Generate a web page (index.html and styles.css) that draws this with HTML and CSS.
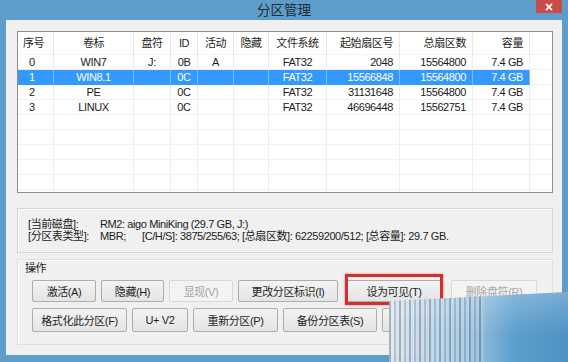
FILE: index.html
```html
<!DOCTYPE html>
<html lang="zh-CN">
<head>
<meta charset="utf-8">
<title>分区管理</title>
<link rel="stylesheet" href="styles.css">
</head>
<body>
<div class="window">
  <div class="titlebar">
    <div></div>
    <div class="title">分区管理</div>
    <div class="close"><svg width="10" height="8" viewBox="0 0 10 8"><path d="M2 0.8 L8 7.2 M8 0.8 L2 7.2" stroke="#fff" stroke-width="1.8" fill="none"/></svg></div>
  </div>
  <div class="content">
    <div class="listbox">
      <div class="row head">
        <div class="c c1">序号</div><div class="c">卷标</div><div class="c">盘符</div><div class="c">ID</div><div class="c">活动</div><div class="c">隐藏</div><div class="c">文件系统</div><div class="c r">起始扇区号</div><div class="c r">总扇区数</div><div class="c r">容量</div><div class="c last"></div>
      </div>
      <div class="row">
        <div class="c c1">0</div><div class="c">WIN7</div><div class="c">J:</div><div class="c">0B</div><div class="c">A</div><div class="c"></div><div class="c">FAT32</div><div class="c r">2048</div><div class="c r">15564800</div><div class="c r">7.4 GB</div><div class="c last"></div>
      </div>
      <div class="row sel">
        <div class="c c1">1</div><div class="c">WIN8.1</div><div class="c"></div><div class="c">0C</div><div class="c"></div><div class="c"></div><div class="c">FAT32</div><div class="c r">15566848</div><div class="c r">15564800</div><div class="c r">7.4 GB</div><div class="c last"></div>
      </div>
      <div class="row">
        <div class="c c1">2</div><div class="c">PE</div><div class="c"></div><div class="c">0C</div><div class="c"></div><div class="c"></div><div class="c">FAT32</div><div class="c r">31131648</div><div class="c r">15564800</div><div class="c r">7.4 GB</div><div class="c last"></div>
      </div>
      <div class="row">
        <div class="c c1">3</div><div class="c">LINUX</div><div class="c"></div><div class="c">0C</div><div class="c"></div><div class="c"></div><div class="c">FAT32</div><div class="c r">46696448</div><div class="c r">15562751</div><div class="c r">7.4 GB</div><div class="c last"></div>
      </div>
      <div class="row"><div class="c"></div><div class="c"></div><div class="c"></div><div class="c"></div><div class="c"></div><div class="c"></div><div class="c"></div><div class="c"></div><div class="c"></div><div class="c"></div><div class="c last"></div></div>
      <div class="row"><div class="c"></div><div class="c"></div><div class="c"></div><div class="c"></div><div class="c"></div><div class="c"></div><div class="c"></div><div class="c"></div><div class="c"></div><div class="c"></div><div class="c last"></div></div>
      <div class="row"><div class="c"></div><div class="c"></div><div class="c"></div><div class="c"></div><div class="c"></div><div class="c"></div><div class="c"></div><div class="c"></div><div class="c"></div><div class="c"></div><div class="c last"></div></div>
      <div class="row"><div class="c"></div><div class="c"></div><div class="c"></div><div class="c"></div><div class="c"></div><div class="c"></div><div class="c"></div><div class="c"></div><div class="c"></div><div class="c"></div><div class="c last"></div></div>
      <div class="row"><div class="c"></div><div class="c"></div><div class="c"></div><div class="c"></div><div class="c"></div><div class="c"></div><div class="c"></div><div class="c"></div><div class="c"></div><div class="c"></div><div class="c last"></div></div>
      <div class="row"><div class="c"></div><div class="c"></div><div class="c"></div><div class="c"></div><div class="c"></div><div class="c"></div><div class="c"></div><div class="c"></div><div class="c"></div><div class="c"></div><div class="c last"></div></div>
    </div>

    <div class="info">
      <div class="line"><span class="lbl">[当前磁盘]:</span><span>RM2: aigo MiniKing (29.7 GB, J:)</span></div>
      <div class="line"><span class="lbl">[分区表类型]:</span><span class="mbr">MBR;</span><span>[C/H/S]: 3875/255/63; [总扇区数]: 62259200/512; [总容量]: 29.7 GB.</span></div>
    </div>

    <div class="ops">
      <div class="ops-label">操作</div>
      <div class="btnrow r1">
        <div class="btn w-act">激活(A)</div>
        <div class="btn w-hide">隐藏(H)</div>
        <div class="btn dis w-show">显现(V)</div>
        <div class="btn w-chg">更改分区标识(I)</div>
        <div class="btn w-vis hl">设为可见(T)</div>
        <div class="btn dis w-del">删除盘符(R)</div>
      </div>
      <div class="btnrow r2">
        <div class="btn w-fmt">格式化此分区(F)</div>
        <div class="btn w-uv">U+ V2</div>
        <div class="btn w-rep">重新分区(P)</div>
        <div class="btn w-bak">备份分区表(S)</div>
        <div class="btn w-bak">恢复分区表</div>
      </div>
    </div>
  </div>
  <div class="watermark"></div>
</div>
</body>
</html>
```

FILE: styles.css
```css
* { box-sizing: border-box; }
html, body {
  margin: 0;
  padding: 0;
  width: 568px;
  height: 362px;
  overflow: hidden;
  background: #5c9dca;
}
body {
  font-family: "Liberation Sans", "Noto Sans CJK SC", sans-serif;
  font-size: 11px;
  letter-spacing: -0.4px;
  color: #1b1b1b;
}
.window {
  position: relative;
  width: 568px;
  height: 362px;
  padding: 0 6px 7px 6px;
  display: flex;
  flex-direction: column;
}
.titlebar {
  height: 20px;
  margin: 0 -6px;
  display: grid;
  grid-template-columns: 1fr auto 1fr;
  align-items: start;
}
.title {
  font-family: "Noto Sans CJK SC", sans-serif;
  font-size: 13.5px;
  line-height: 18px;
  letter-spacing: 0;
  color: #1e2a33;
}
.close {
  justify-self: end;
  margin-right: 6px;
  width: 26px;
  height: 13px;
  background: #c94c47;
  display: flex;
  align-items: center;
  justify-content: center;
}
.content {
  flex: 1;
  background: #f0f0f0;
  border-top: 1px solid #e6eef4;
  padding: 10px 9px 0 11px;
  display: flex;
  flex-direction: column;
}
.listbox {
  width: 536px;
  height: 162px;
  background: #fff;
  border: 1px solid #8a8e94;
  overflow: hidden;
}
.row {
  display: grid;
  grid-template-columns: 36px 80px 37px 27px 36px 35px 58px 73px 73px 57px 22px;
  height: 15px;
  line-height: 14px;
}
.row.head {
  height: 23px;
  line-height: 23px;
}
.c {
  border-right: 1px solid #ececec;
  border-bottom: 1px solid #f0f0f0;
  text-align: center;
  white-space: nowrap;
  overflow: hidden;
}
.head .c {
  border-bottom: 1px solid #f4f4f4;
  border-right-color: #e6e6e6;
  color: #1e1e1e;
}
.c.last { border-right: none; }
.c.r { text-align: right; padding-right: 6px; }
.c1 { text-align: left; padding-left: 11px; }
.head .c1 { padding-left: 5px; }
.sel .c {
  background: #3399ff;
  color: #fff;
  border-right-color: #7dbdff;
  border-bottom-color: #3399ff;
}
.sel .c.last {
  background: #fff;
  border-bottom-color: #f0f0f0;
}
.info {
  margin-top: 15px;
  width: 536px;
  height: 45px;
  border: 1px solid #d6d6d6;
  box-shadow: inset 1px 1px 0 #fcfcfc;
  padding: 9px 0 0 10px;
}
.line {
  display: flex;
  height: 12px;
  line-height: 12px;
  white-space: nowrap;
}
.lbl { width: 72px; }
.mbr { width: 42px; }
.ops {
  margin-top: 6px;
  width: 536px;
  height: 86px;
  border: 1px solid #dedede;
  box-shadow: inset 1px 1px 0 #fbfbfb;
  padding: 2px 0 0 7px;
}
.ops-label {
  line-height: 13px;
  height: 13px;
}
.btnrow {
  display: flex;
  gap: 5px;
  padding-left: 7px;
}
.r1 { margin-top: 5px; height: 22px; }
.r2 { margin-top: 6px; height: 24px; }
.btn {
  height: 100%;
  border: 1px solid #adadad;
  border-radius: 2px;
  background: linear-gradient(#f3f3f3, #e4e4e4);
  display: flex;
  align-items: center;
  justify-content: center;
  white-space: nowrap;
  color: #1e1e1e;
  flex: none;
}
.btn.dis {
  color: #a6a6a6;
  border-color: #d8d8d8;
  background: #f3f3f3;
}
.w-act { width: 64px; }
.w-hide { width: 63px; }
.w-show { width: 64px; }
.w-chg { width: 100px; }
.w-vis { width: 94px; margin-left: 4px; }
.w-del { width: 86px; margin-left: 5px; }
.w-fmt { width: 95px; }
.w-uv { width: 56px; }
.w-rep { width: 85px; }
.w-bak { width: 94px; }
.hl { position: relative; }
.hl::after {
  content: "";
  position: absolute;
  top: -7px;
  bottom: -4px;
  left: -3px;
  right: -3px;
  border: 3px solid #d3302d;
  box-shadow: 0 0 2px rgba(200, 40, 40, 0.6);
}
.watermark {
  position: absolute;
  left: 389px;
  top: 292px;
  right: 0;
  bottom: 0;
  clip-path: polygon(0 9px, 100% 0, 100% 100%, 0 100%);
  background:
    repeating-linear-gradient(90deg, rgba(70, 80, 95, 0.35) 0 2px, rgba(255, 255, 255, 0.15) 2px 5px, rgba(80, 130, 175, 0.3) 5px 7px, rgba(230, 235, 240, 0.2) 7px 10px) 0 0 / 95px 100% no-repeat,
    linear-gradient(180deg, rgba(255, 255, 255, 0.25), rgba(255, 255, 255, 0) 60%),
    linear-gradient(90deg, rgba(222, 228, 235, 0.96) 0, #9cc3df 45%, #5c9fcd 70%, #4d92c4 100%);
}
```
